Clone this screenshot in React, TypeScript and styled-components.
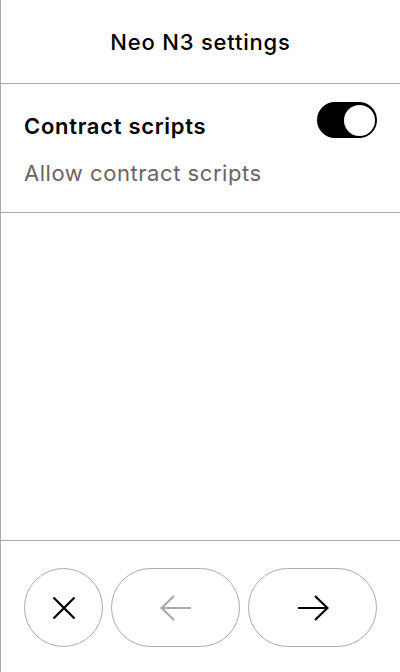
import React from "react";
import styled, { createGlobalStyle } from "styled-components";

const Global = createGlobalStyle`
  html, body { margin: 0; padding: 0; background: #fff; }
  body { font-family: Inter, "Noto Sans", sans-serif; color: #000; }
  * { box-sizing: border-box; }
`;

const Screen = styled.div`
  width: 400px;
  height: 672px;
  display: flex;
  flex-direction: column;
  border-left: 1px solid #aaa;
  background: #fff;
`;

const Header = styled.header`
  height: 84px;
  flex: none;
  display: flex;
  align-items: center;
  justify-content: center;
  border-bottom: 1px solid #aaa;
  font-size: 22px;
  font-weight: 500;
  letter-spacing: 0.8px;
`;

const Section = styled.section`
  flex: none;
  height: 129px;
  padding: 18px 23px 0 23px;
  border-bottom: 1px solid #aaa;
  display: flex;
  flex-direction: column;
`;

const Row = styled.div`
  display: flex;
  align-items: flex-end;
  justify-content: space-between;
  height: 36px;
`;

const Label = styled.div`
  font-size: 22px;
  font-weight: 600;
  letter-spacing: 0.7px;
  line-height: 27px;
  margin-bottom: -2px;
`;

const Description = styled.div`
  margin-top: 22px;
  font-size: 22px;
  line-height: 27px;
  font-weight: 400;
  color: #666;
  letter-spacing: 0.55px;
`;

const Track = styled.div<{ $on: boolean }>`
  width: 60px;
  height: 36px;
  border-radius: 18px;
  background: ${(p) => (p.$on ? "#000" : "#ccc")};
  display: flex;
  align-items: center;
  justify-content: ${(p) => (p.$on ? "flex-end" : "flex-start")};
  padding: 0 2px;
  align-self: flex-start;
`;

const Knob = styled.div`
  width: 31px;
  height: 31px;
  border-radius: 50%;
  background: #fff;
`;

const Spacer = styled.div`
  flex: 1;
`;

const Footer = styled.footer`
  flex: none;
  height: 132px;
  border-top: 1px solid #aaa;
  display: flex;
  gap: 8px;
  padding: 27px 23px 0 23px;
  align-items: flex-start;
`;

const Button = styled.button<{ $round?: boolean }>`
  height: 79px;
  ${(p) => (p.$round ? "width: 79px; flex: none;" : "flex: 1;")}
  border-radius: 40px;
  border: 1.5px solid #aaa;
  background: #fff;
  display: flex;
  align-items: center;
  justify-content: center;
  padding: 0;
  cursor: pointer;
`;

const Arrow = ({ dir, color }: { dir: "left" | "right"; color: string }) => (
  <svg width="32" height="26" viewBox="0 0 32 26" fill="none">
    {dir === "right" ? (
      <path d="M1 13H30.5M18 1L30.5 13L18 25" stroke={color} strokeWidth="2.2" />
    ) : (
      <path d="M31 13H1.5M14 1L1.5 13L14 25" stroke={color} strokeWidth="2.2" />
    )}
  </svg>
);

const Close = () => (
  <svg width="24" height="24" viewBox="0 0 24 24" fill="none">
    <path d="M1.5 1.5L22.5 22.5M22.5 1.5L1.5 22.5" stroke="#000" strokeWidth="2.2" />
  </svg>
);

export default function App() {
  return (
    <>
      <Global />
      <Screen>
        <Header>Neo N3 settings</Header>
        <Section>
          <Row>
            <Label>Contract scripts</Label>
            <Track $on>
              <Knob />
            </Track>
          </Row>
          <Description>Allow contract scripts</Description>
        </Section>
        <Spacer />
        <Footer>
          <Button $round aria-label="Cancel">
            <Close />
          </Button>
          <Button aria-label="Back">
            <Arrow dir="left" color="#aaa" />
          </Button>
          <Button aria-label="Next">
            <Arrow dir="right" color="#000" />
          </Button>
        </Footer>
      </Screen>
    </>
  );
}
